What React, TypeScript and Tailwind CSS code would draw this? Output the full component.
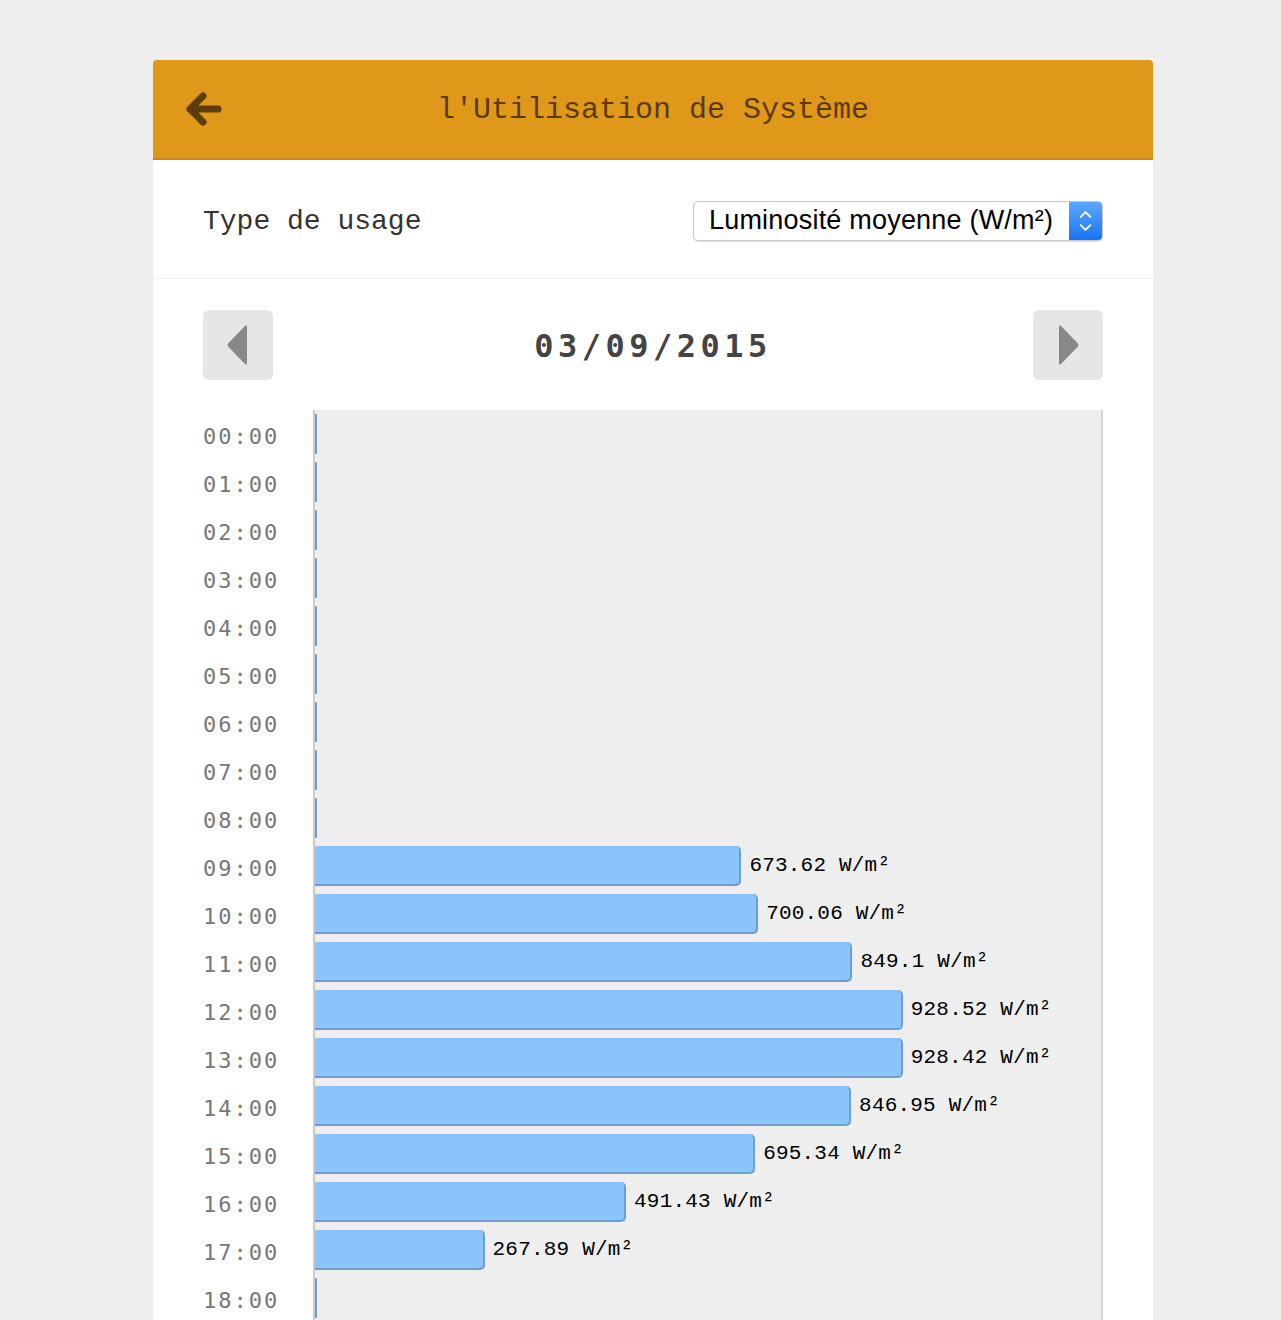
import { ChevronDown, ChevronUp } from "lucide-react";

const mono = "font-['Liberation_Mono','Courier_New',monospace]";
const sansMono = "font-['DejaVu_Sans_Mono',Menlo,monospace]";

const readings: number[] = [
  0, 0, 0, 0, 0, 0, 0, 0, 0, 673.62, 700.06, 849.1, 928.52, 928.42, 846.95,
  695.34, 491.43, 267.89, 0,
];

const PX_PER_UNIT = 0.633;

function Triangle({ dir }: { dir: "left" | "right" }) {
  return (
    <svg width="26" height="42" viewBox="0 0 26 42">
      {dir === "left" ? (
        <path
          d="M22 3 L22 39 Q22 42 19.5 39.5 L3.5 23 Q1.5 21 3.5 19 L19.5 2.5 Q22 0 22 3 Z"
          fill="#888888"
        />
      ) : (
        <path
          d="M4 3 L4 39 Q4 42 6.5 39.5 L22.5 23 Q24.5 21 22.5 19 L6.5 2.5 Q4 0 4 3 Z"
          fill="#888888"
        />
      )}
    </svg>
  );
}

function HourRow({ hour, value }: { hour: number; value: number }) {
  const label = `${String(hour).padStart(2, "0")}:00`;
  return (
    <div className="flex h-[48px]">
      <div
        className={`w-[110px] bg-white pt-[5px] flex items-center text-[22px] tracking-[2px] text-[#777777] ${sansMono}`}
      >
        {label}
      </div>
      <div className="flex-1 bg-[#eeeeee] border-l-2 border-r-2 border-l-[#cccccc] border-r-[#d4d4d4] py-[4px] flex items-center">
        {value > 0 ? (
          <>
            <div
              className="h-[40px] bg-[#89c4fb] border-b-2 border-r-2 border-[#6b9fd3] rounded-r-[5px]"
              style={{ width: `${value * PX_PER_UNIT}px` }}
            />
            <span className={`ml-[8px] text-[21px] tracking-[0.2px] text-black ${mono}`}>
              {value} W/m²
            </span>
          </>
        ) : (
          <div className="h-[40px] w-[2px] bg-[#6b9fd3] rounded-r-[1px]" />
        )}
      </div>
    </div>
  );
}

export default function App() {
  return (
    <div className="min-h-screen bg-[#eeeeee] pt-[60px]">
      <div className="ml-[153px] w-[1000px] bg-white rounded-t-[4px]">
        {/* Header */}
        <div className="h-[100px] bg-[#df9819] border-b-2 border-[#c98612] rounded-t-[4px] grid grid-cols-[1fr_auto_1fr] items-center px-[33px]">
          <svg width="36" height="36" viewBox="0 0 36 36" className="mt-[2px]">
            <path
              d="M17 4 L4 17 L17 30 M4 17 L32 17"
              fill="none"
              stroke="#5c3d0a"
              strokeWidth="7"
              strokeLinecap="round"
              strokeLinejoin="round"
            />
          </svg>
          <h1 className={`pt-[3px] text-[30px] text-[#5a3a08] ${mono}`}>
            l'Utilisation de Système
          </h1>
          <div />
        </div>

        {/* Usage type */}
        <div className="h-[119px] flex items-center justify-between px-[50px] border-b border-[#eeeeee]">
          <span className={`pt-[6px] text-[28px] text-[#333333] ${mono}`}>
            Type de usage
          </span>
          <div className="mt-[3px] flex h-[40px] w-[410px] rounded-[5px] border border-[#c8c8c8] shadow-[0_1px_1px_rgba(0,0,0,0.12)] overflow-hidden">
            <div className="flex-1 flex items-center pl-[15px] text-[27px] tracking-[0.2px] text-black font-['Liberation_Sans',Arial,sans-serif]">
              Luminosité moyenne (W/m²)
            </div>
            <div className="w-[33px] bg-gradient-to-b from-[#5aa8fc] to-[#1673f4] flex flex-col items-center justify-center text-white">
              <ChevronUp size={19} strokeWidth={2.5} className="-mb-[3px]" />
              <ChevronDown size={19} strokeWidth={2.5} className="-mt-[3px]" />
            </div>
          </div>
        </div>

        {/* Date navigation */}
        <div className="flex items-center justify-between px-[50px] pt-[31px] pb-[30px]">
          <button className="w-[70px] h-[70px] rounded-[6px] bg-[#e6e6e6] flex items-center justify-center">
            <Triangle dir="left" />
          </button>
          <span
            className={`pt-[2px] text-[32px] font-bold tracking-[4.5px] text-[#444444] ${sansMono}`}
          >
            03/09/2015
          </span>
          <button className="w-[70px] h-[70px] rounded-[6px] bg-[#e6e6e6] flex items-center justify-center">
            <Triangle dir="right" />
          </button>
        </div>

        {/* Hourly chart */}
        <div className="px-[50px]">
          {readings.map((v, i) => (
            <HourRow key={i} hour={i} value={v} />
          ))}
        </div>
      </div>
    </div>
  );
}
